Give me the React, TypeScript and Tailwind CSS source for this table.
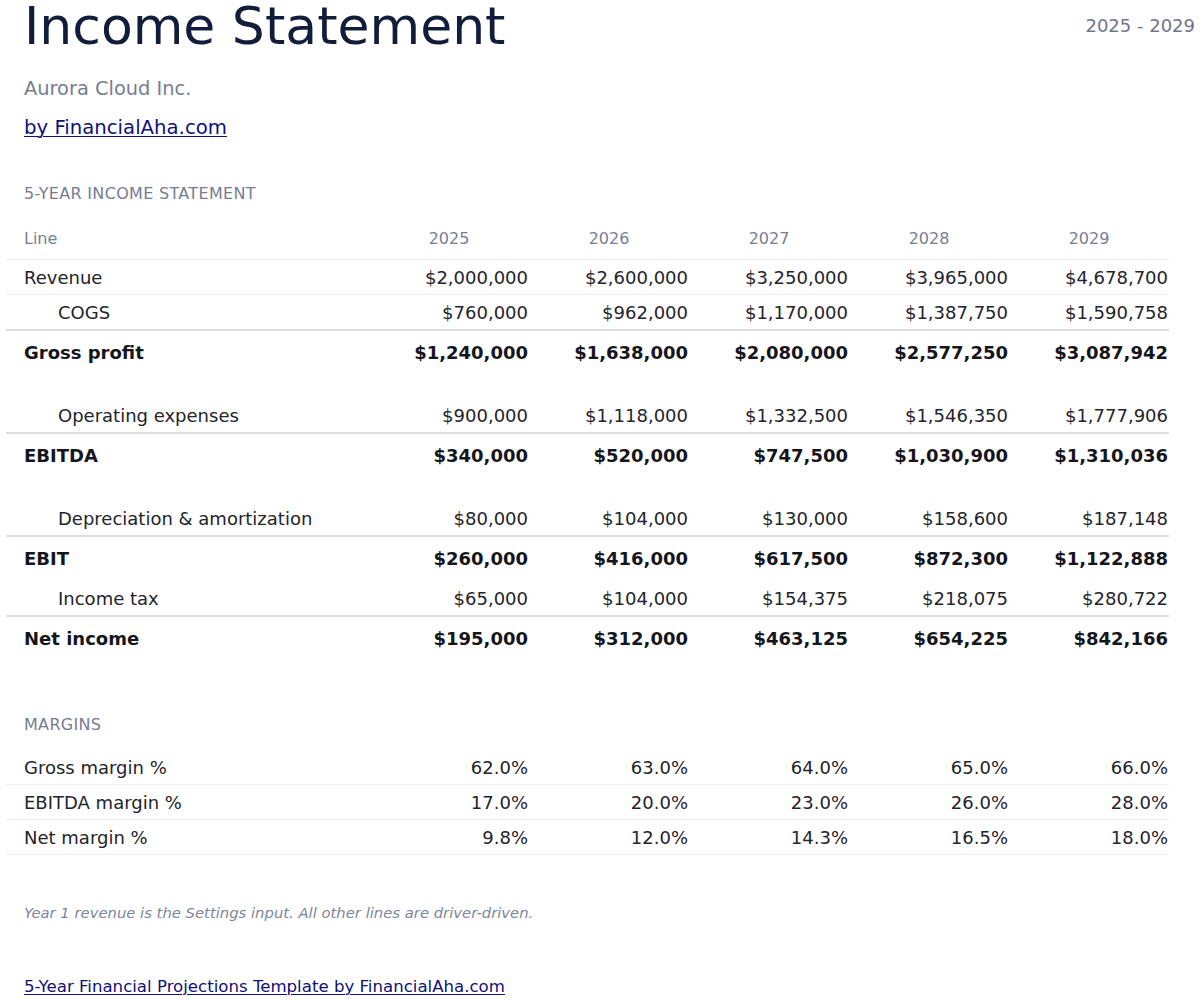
import React from 'react';

type Row = {
  label: string;
  values: string[];
  kind: 'plain' | 'sub' | 'total';
  border?: 'light' | 'dark' | 'none';
  spacerAfter?: boolean;
};

const years = ['2025', '2026', '2027', '2028', '2029'];

const rows: Row[] = [
  { label: 'Revenue', values: ['$2,000,000', '$2,600,000', '$3,250,000', '$3,965,000', '$4,678,700'], kind: 'plain', border: 'light' },
  { label: 'COGS', values: ['$760,000', '$962,000', '$1,170,000', '$1,387,750', '$1,590,758'], kind: 'sub', border: 'dark' },
  { label: 'Gross profit', values: ['$1,240,000', '$1,638,000', '$2,080,000', '$2,577,250', '$3,087,942'], kind: 'total', border: 'none', spacerAfter: true },
  { label: 'Operating expenses', values: ['$900,000', '$1,118,000', '$1,332,500', '$1,546,350', '$1,777,906'], kind: 'sub', border: 'dark' },
  { label: 'EBITDA', values: ['$340,000', '$520,000', '$747,500', '$1,030,900', '$1,310,036'], kind: 'total', border: 'none', spacerAfter: true },
  { label: 'Depreciation & amortization', values: ['$80,000', '$104,000', '$130,000', '$158,600', '$187,148'], kind: 'sub', border: 'dark' },
  { label: 'EBIT', values: ['$260,000', '$416,000', '$617,500', '$872,300', '$1,122,888'], kind: 'total', border: 'none' },
  { label: 'Income tax', values: ['$65,000', '$104,000', '$154,375', '$218,075', '$280,722'], kind: 'sub', border: 'dark' },
  { label: 'Net income', values: ['$195,000', '$312,000', '$463,125', '$654,225', '$842,166'], kind: 'total', border: 'none' },
];

const margins = [
  { label: 'Gross margin %', values: ['62.0%', '63.0%', '64.0%', '65.0%', '66.0%'] },
  { label: 'EBITDA margin %', values: ['17.0%', '20.0%', '23.0%', '26.0%', '28.0%'] },
  { label: 'Net margin %', values: ['9.8%', '12.0%', '14.3%', '16.5%', '18.0%'] },
];

const borderClass = (b?: Row['border']) => {
  if (b === 'dark') return 'border-b-2 border-[#dcdde3]';
  if (b === 'light') return 'border-b border-[#eceef1]';
  return '';
};

const StatementRow = ({ row }: { row: Row }) => {
  const isTotal = row.kind === 'total';
  const pad = isTotal ? 'pt-[10.5px] pb-[12.5px]' : 'py-[6.5px]';
  const weight = isTotal ? 'font-bold text-[#15161c]' : 'text-[#23242c]';
  return (
    <>
      <tr className={borderClass(row.border)}>
        <td className={`${pad} ${weight} ${row.kind === 'sub' ? 'pl-[52px]' : 'pl-[18px]'} text-left`}>{row.label}</td>
        {row.values.map((v, i) => (
          <td key={i} className={`${pad} ${weight} pr-px text-right`}>
            {v}
          </td>
        ))}
      </tr>
      {row.spacerAfter && (
        <tr>
          <td colSpan={6} className="h-[23px] p-0"></td>
        </tr>
      )}
    </>
  );
};

const Columns = () => (
  <colgroup>
    <col className="w-[363px]" />
    {years.map((y) => (
      <col key={y} className="w-[160px]" />
    ))}
  </colgroup>
);

const App = () => {
  return (
    <div className="min-h-screen bg-white font-['DejaVu_Sans',sans-serif] leading-[normal] pl-6 pr-[5px] pb-3">
      {/* Header */}
      <div className="flex items-start justify-between">
        <h1 className="text-[52px] leading-none font-normal text-[#121d3b]">Income Statement</h1>
        <div className="pt-[15px] text-[18px] text-[#70768a]">2025 - 2029</div>
      </div>
      <div className="mt-[25px] text-[19.4px] text-[#777d8f]">Aurora Cloud Inc.</div>
      <a href="#" className="mt-[16px] inline-block text-[19.7px] text-[#10107a] underline decoration-1 underline-offset-2">
        by FinancialAha.com
      </a>

      {/* Income statement */}
      <div className="mt-[45px] text-[16px] tracking-[0.02em] text-[#777d8f]">5-YEAR INCOME STATEMENT</div>
      <table className="-ml-[18px] mt-[14px] w-[1162px] table-fixed border-collapse text-[18px]">
        <Columns />
        <thead>
          <tr className="border-b border-[#eceef1]">
            <th className="pt-3 pb-[11px] pl-[18px] text-left text-[16px] font-normal text-[#7a8092]">Line</th>
            {years.map((y) => (
              <th key={y} className="pt-3 pb-[11px] text-center text-[16px] font-normal text-[#7a8092]">
                {y}
              </th>
            ))}
          </tr>
        </thead>
        <tbody>
          {rows.map((r) => (
            <StatementRow key={r.label} row={r} />
          ))}
        </tbody>
      </table>

      {/* Margins */}
      <div className="mt-[54px] text-[16px] tracking-[0.02em] text-[#777d8f]">MARGINS</div>
      <table className="-ml-[18px] mt-[16px] w-[1162px] table-fixed border-collapse text-[18px] text-[#23242c]">
        <Columns />
        <tbody>
          {margins.map((m) => (
            <tr key={m.label} className="border-b border-[#eceef1]">
              <td className="py-[6.5px] pl-[18px] text-left">{m.label}</td>
              {m.values.map((v, i) => (
                <td key={i} className="py-[6.5px] pr-px text-right">
                  {v}
                </td>
              ))}
            </tr>
          ))}
        </tbody>
      </table>

      <p className="mt-[49px] text-[14.8px] italic text-[#808698]">
        Year 1 revenue is the Settings input. All other lines are driver-driven.
      </p>
      <a href="#" className="mt-[56px] inline-block text-[16.6px] text-[#10107a] underline decoration-1 underline-offset-2">
        5-Year Financial Projections Template by FinancialAha.com
      </a>
    </div>
  );
};

export default App;
